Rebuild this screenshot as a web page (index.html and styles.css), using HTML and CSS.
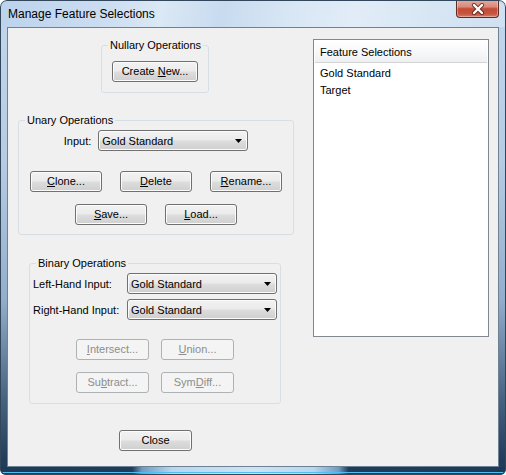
FILE: index.html
```html
<!DOCTYPE html>
<html>
<head>
<meta charset="utf-8">
<title>Manage Feature Selections</title>
<link rel="stylesheet" href="styles.css">
</head>
<body>
<div class="window">
  <div class="titlebar">
    <span class="title">Manage Feature Selections</span>
    <div class="close-x">
      <svg width="14" height="12" viewBox="0 0 14 12">
        <path d="M3 2 L11 10 M11 2 L3 10" stroke="#4a1a16" stroke-width="4.2" stroke-linecap="round" fill="none" opacity="0.75"/>
        <path d="M3 2 L11 10 M11 2 L3 10" stroke="#ffffff" stroke-width="2.4" stroke-linecap="round" fill="none"/>
      </svg>
    </div>
  </div>
  <div class="content">
    <div class="left">
      <fieldset class="group nullary">
        <legend>Nullary Operations</legend>
        <div class="row row-create">
          <button class="btn btn-create">Create <u>N</u>ew...</button>
        </div>
      </fieldset>

      <fieldset class="group unary">
        <legend>Unary Operations</legend>
        <div class="row input-row">
          <span class="label input-label">Input:</span>
          <div class="combo">
            <span class="val">Gold Standard</span>
            <svg class="arrow" width="7" height="4" viewBox="0 0 7 4"><polygon points="0,0 7,0 3.5,4" fill="#000"/></svg>
          </div>
        </div>
        <div class="row urow1">
          <button class="btn"><u>C</u>lone...</button>
          <button class="btn"><u>D</u>elete</button>
          <button class="btn"><u>R</u>ename...</button>
        </div>
        <div class="row urow2">
          <button class="btn"><u>S</u>ave...</button>
          <button class="btn"><u>L</u>oad...</button>
        </div>
      </fieldset>

      <fieldset class="group binary">
        <legend>Binary Operations</legend>
        <div class="bgrid">
          <span class="label">Left-Hand Input:</span>
          <div class="combo">
            <span class="val">Gold Standard</span>
            <svg class="arrow" width="7" height="4" viewBox="0 0 7 4"><polygon points="0,0 7,0 3.5,4" fill="#000"/></svg>
          </div>
          <span class="label">Right-Hand Input:</span>
          <div class="combo">
            <span class="val">Gold Standard</span>
            <svg class="arrow" width="7" height="4" viewBox="0 0 7 4"><polygon points="0,0 7,0 3.5,4" fill="#000"/></svg>
          </div>
        </div>
        <div class="row brow1">
          <button class="btn btn-b" disabled><u>I</u>ntersect...</button>
          <button class="btn btn-b" disabled><u>U</u>nion...</button>
        </div>
        <div class="row brow2">
          <button class="btn btn-b" disabled>Su<u>b</u>tract...</button>
          <button class="btn btn-b" disabled>Sym<u>D</u>iff...</button>
        </div>
      </fieldset>

      <button class="btn btn-close">Close</button>
    </div>

    <div class="list">
      <div class="list-head">Feature Selections</div>
      <div class="items">
        <div class="item">Gold Standard</div>
        <div class="item">Target</div>
      </div>
    </div>
  </div>
  <div class="bottom"></div>
</div>
</body>
</html>
```
FILE: styles.css
```css
* { box-sizing: border-box; }

html, body {
  margin: 0;
  padding: 0;
}

body {
  width: 506px;
  height: 475px;
  overflow: hidden;
  background: #ffffff;
  font-family: "Liberation Sans", Arial, sans-serif;
  font-size: 11px;
  color: #000;
}

.window {
  position: relative;
  width: 506px;
  height: 475px;
  display: flex;
  flex-direction: column;
  border-radius: 7px 7px 6px 6px;
  overflow: hidden;
  background: linear-gradient(to bottom, #c3d7ec 0px, #b6cce3 160px, #93aecb 300px, #45627f 400px, #213d5a 460px);
}

.window::after {
  content: "";
  position: absolute;
  inset: 0;
  border: 1px solid #33475c;
  border-radius: 7px 7px 6px 6px;
  pointer-events: none;
}

.titlebar {
  flex: none;
  height: 27px;
  display: flex;
  align-items: flex-start;
  padding: 0 7px 0 8px;
  background: linear-gradient(100deg, #bcd3ec 0%, #cadcf0 20%, #dbe8f5 32%, #c8dbef 44%, #d9e7f5 58%, #e1ecf7 70%, #cfe0f1 100%);
}

.title {
  font-size: 12px;
  line-height: 14px;
  padding-top: 7px;
  color: #000;
}

.close-x {
  margin-left: auto;
  width: 43px;
  height: 18px;
  border: 1px solid #5e2b25;
  border-top: none;
  border-radius: 0 0 4px 4px;
  background: linear-gradient(to bottom, #e9aa9d 0%, #d88a7b 40%, #c34a36 52%, #c65540 80%, #d57a62 100%);
  box-shadow: inset 0 0 0 1px rgba(255, 255, 255, 0.35);
  display: flex;
  align-items: center;
  justify-content: center;
}

.content {
  flex: none;
  height: 440px;
  margin: 0 7px;
  border: 1px solid #6f8295;
  background: #f0f0f0;
  display: flex;
  align-items: flex-start;
  padding-top: 10px;
}

.left {
  flex: none;
  width: 305px;
  display: flex;
  flex-direction: column;
  align-items: flex-start;
}

.group {
  margin: 0;
  padding: 0;
  min-width: 0;
  border: 1px solid #d5dfe5;
  border-radius: 3px;
}

.group legend {
  margin-left: 6px;
  padding: 0 2px;
  line-height: 14px;
  font-size: 11px;
}

.nullary {
  margin-left: 93px;
  width: 108px;
  height: 55px;
}

.unary {
  margin-left: 10px;
  margin-top: 20px;
  width: 276px;
  height: 122px;
}

.binary {
  margin-left: 21px;
  margin-top: 21px;
  width: 252px;
  height: 148px;
}

.row {
  display: flex;
  justify-content: center;
}

.row-create { margin-top: 9px; }

.input-row {
  margin-top: 3px;
  align-items: center;
  gap: 7px;
}

.input-label { padding-top: 2px; }

.urow1 { margin-top: 20px; gap: 18px; }
.urow2 { margin-top: 12px; gap: 18px; }

.bgrid {
  margin-top: 3px;
  padding-left: 3px;
  display: grid;
  grid-template-columns: 94px 150px;
  row-gap: 5px;
  align-items: center;
}

.bgrid .label { padding-top: 2px; }

.brow1 { margin-top: 19px; gap: 12px; }
.brow2 { margin-top: 12px; gap: 12px; }

.label {
  line-height: 13px;
  white-space: nowrap;
}

.btn {
  width: 72px;
  height: 21px;
  padding: 0;
  margin: 0;
  font-family: "Liberation Sans", Arial, sans-serif;
  font-size: 11px;
  color: #000;
  border: 1px solid #707070;
  border-radius: 3px;
  background: linear-gradient(to bottom, #f2f2f2 0%, #ebebeb 48%, #dddddd 52%, #cfcfcf 100%);
  box-shadow: inset 0 0 0 1px #fbfbfb;
  line-height: 17px;
  white-space: nowrap;
}

.btn-create { width: 86px; }

.btn-b { width: 73px; }

.btn:disabled {
  color: #8d8d8d;
  border-color: #adb2b5;
  background: #f4f4f4;
  box-shadow: none;
}

.btn-close {
  width: 73px;
  margin-left: 111px;
  margin-top: 26px;
}

.combo {
  width: 150px;
  height: 21px;
  display: flex;
  align-items: center;
  padding: 0 5px 0 3px;
  border: 1px solid #707070;
  border-radius: 3px;
  background: linear-gradient(to bottom, #f2f2f2 0%, #ebebeb 48%, #dddddd 52%, #cfcfcf 100%);
  box-shadow: inset 0 0 0 1px #fbfbfb;
}

.combo .val {
  flex: 1;
  white-space: nowrap;
}

.combo .arrow {
  flex: none;
  display: block;
}

.list {
  flex: none;
  width: 176px;
  height: 298px;
  margin-top: 1px;
  border: 1px solid #828790;
  background: #ffffff;
  padding: 1px;
}

.list-head {
  height: 22px;
  line-height: 22px;
  padding-left: 5px;
  border-bottom: 1px solid #d5d5d5;
  background: linear-gradient(to bottom, #ffffff 0%, #f7f8f9 50%, #eef0f3 100%);
  white-space: nowrap;
}

.items { padding-top: 2px; }

.item {
  height: 17px;
  line-height: 17px;
  padding-left: 5px;
  white-space: nowrap;
}

.bottom {
  flex: 1;
  margin: 0 1px 1px;
  border-radius: 0 0 5px 5px;
  background:
    linear-gradient(to bottom, rgba(0,0,0,0) 0px, rgba(0,0,0,0) 5px, #4cc0ee 5px, #4cc0ee 6px, rgba(0,0,0,0) 6px),
    linear-gradient(to right, #1e3a58 0%, #1f3c5a 26%, #6f9cc2 28%, #b9d6ee 34%, #cfe3f3 50%, #b9d6ee 62%, #6f9cc2 67%, #1f3c5a 69%, #1e3a58 100%);
}
```
